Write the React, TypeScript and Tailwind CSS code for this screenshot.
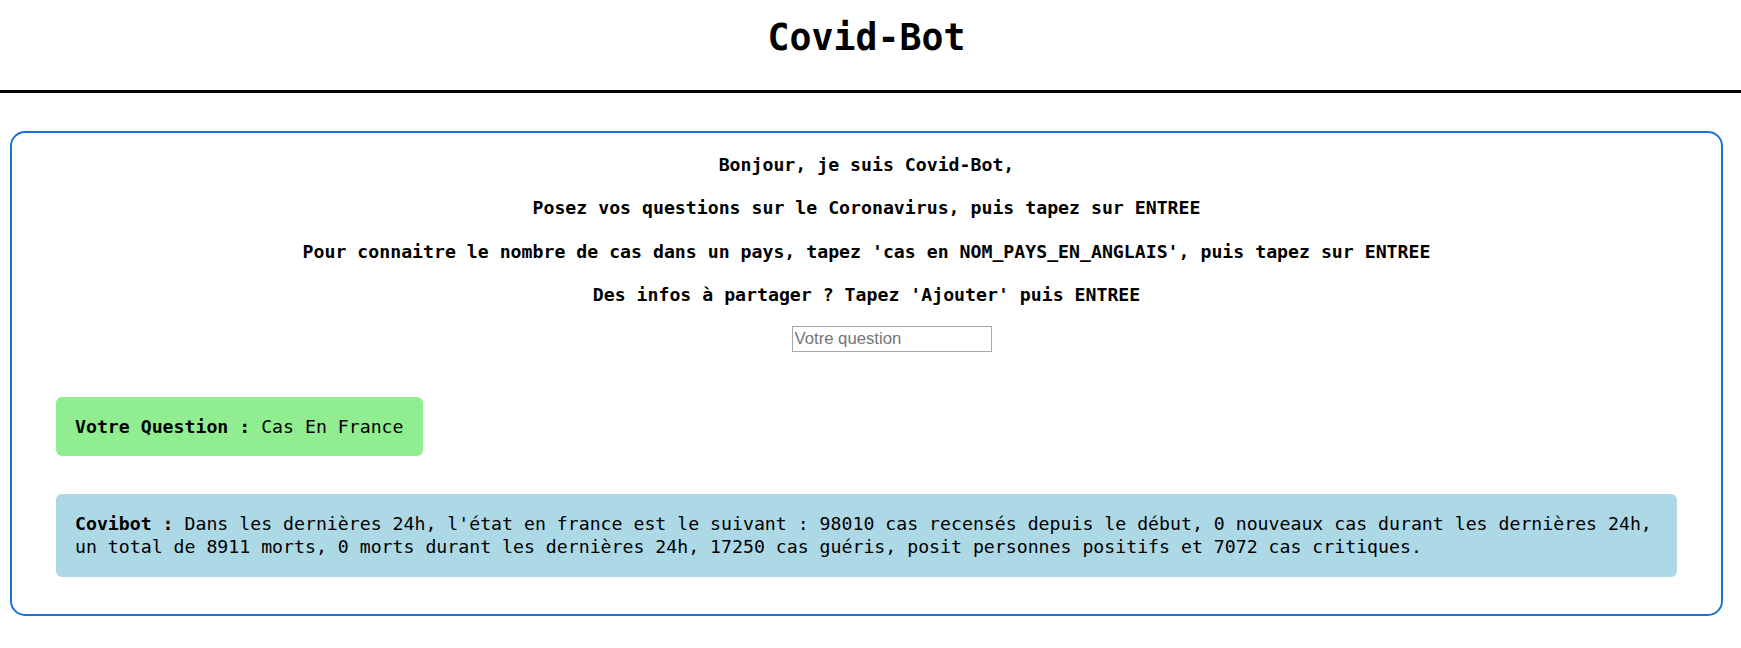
const MONO = "font-['DejaVu_Sans_Mono','Liberation_Mono',monospace]";

export default function App() {
  return (
    <div className={`min-h-screen bg-white text-black ${MONO}`}>
      <header className="h-[93px] border-b-[3px] border-black pt-[20px] pr-[8px]">
        <h1 className="text-center text-[36.5px] font-bold leading-none">
          Covid-Bot
        </h1>
      </header>

      <main className="ml-[10px] mt-[38px] w-[1713px] rounded-[15px] border-2 border-[#1a73d8] px-[44px] pb-[37px]">
        <div className="text-center text-[18.2px] font-bold leading-[23.4px]">
          <p className="mt-[20px]">Bonjour, je suis Covid-Bot,</p>
          <p className="mt-[20px]">
            Posez vos questions sur le Coronavirus, puis tapez sur ENTREE
          </p>
          <p className="mt-[20px]">
            Pour connaitre le nombre de cas dans un pays, tapez 'cas en
            NOM_PAYS_EN_ANGLAIS', puis tapez sur ENTREE
          </p>
          <p className="mt-[20px]">
            Des infos à partager ? Tapez 'Ajouter' puis ENTREE
          </p>
        </div>

        <div className="mt-[19px] flex justify-center">
          <input
            type="text"
            placeholder="Votre question"
            className="ml-[50px] h-[26px] w-[200px] border border-[#a9a9a9] px-[2px] font-['Liberation_Sans',Arial,sans-serif] text-[16.7px] placeholder:text-[#757575] focus:outline-none"
          />
        </div>

        <div className="mt-[45px]">
          <p className="inline-block rounded-[6px] bg-[#90ee90] px-[19px] py-[18px] text-[18.2px] leading-[23.4px]">
            <b>Votre Question :</b> Cas En France
          </p>
        </div>

        <p className="mt-[38px] rounded-[6px] bg-[#add8e6] px-[19px] py-[18px] text-[18.2px] leading-[23.4px]">
          <b>Covibot :</b> Dans les dernières 24h, l'état en france est le
          suivant : 98010 cas recensés depuis le début, 0 nouveaux cas durant
          les dernières 24h, un total de 8911 morts, 0 morts durant les
          dernières 24h, 17250 cas guéris, posit personnes positifs et 7072 cas
          critiques.
        </p>
      </main>
    </div>
  );
}
